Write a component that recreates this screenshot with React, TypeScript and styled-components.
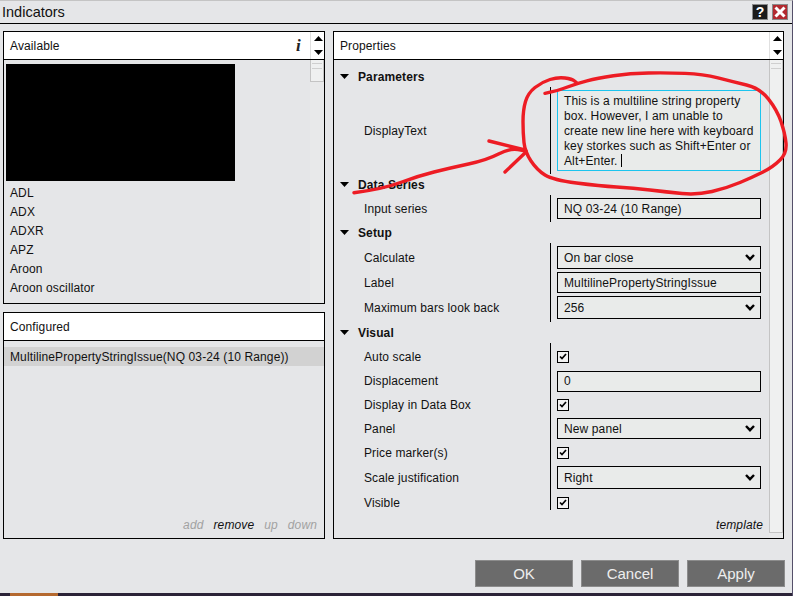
import React from "react";
import styled, { createGlobalStyle } from "styled-components";

const Global = createGlobalStyle`
  html, body { margin: 0; padding: 0; background: #e5e6e8; }
  * { box-sizing: border-box; }
`;

const Window = styled.div`
  position: relative;
  width: 793px;
  height: 596px;
  overflow: hidden;
  display: flex;
  flex-direction: column;
  background: #e5e6e8;
  color: #111;
  font: 12px/14px "Liberation Sans", Arial, sans-serif;
  letter-spacing: 0.12px;
  border-top: 1px solid #c4c4c4;
  border-right: 1px solid #55506a;
`;

const TitleBar = styled.header`
  height: 23px;
  flex: none;
  display: flex;
  align-items: center;
  gap: 4px;
  padding: 0 4px 0 2px;
  border-bottom: 1px solid #000;
`;

const Title = styled.h1`
  flex: 1;
  margin: 0;
  font-size: 14.5px;
  font-weight: 400;
  letter-spacing: 0;
`;

const WindowButton = styled.button<{ $close?: boolean }>`
  width: 16px;
  height: 16px;
  padding: 0;
  display: flex;
  align-items: center;
  justify-content: center;
  border: 1px solid #8a8a8a;
  background: ${(p) => (p.$close ? "#b22a30" : "#1b1b1b")};
  color: #fff;
  font: bold 14px/14px "Liberation Sans", Arial, sans-serif;
`;

const Main = styled.main`
  flex: 1;
  min-height: 0;
  display: grid;
  grid-template-columns: 322px 451px;
  column-gap: 8px;
  padding: 7px 0 0 3px;
  height: 515px;
`;

const LeftColumn = styled.div`
  display: flex;
  flex-direction: column;
  gap: 8px;
`;

const Panel = styled.section<{ $height: number }>`
  height: ${(p) => p.$height}px;
  display: flex;
  flex-direction: column;
  border: 1px solid #000;
`;

const PanelHeader = styled.div`
  height: 28px;
  flex: none;
  display: flex;
  align-items: center;
  padding-left: 6px;
  background: #fff;
  border-bottom: 1px solid #000;
  font-size: 12px;
`;

const PanelTitle = styled.span`
  flex: 1;
`;

const InfoGlyph = styled.span`
  width: 24px;
  padding-left: 10px;
  font: italic bold 17px/16px "Liberation Serif", serif;
  color: #222;
`;

const Stepper = styled.div`
  width: 14px;
  align-self: stretch;
  display: flex;
  flex-direction: column;
  align-items: center;
  justify-content: space-between;
  padding: 4px 0 4px 1px;
  border-left: 1px solid #e0e0e0;
`;

const PanelBody = styled.div`
  flex: 1;
  min-height: 0;
  display: flex;
`;

const ListColumn = styled.div`
  flex: 1;
  min-width: 0;
  display: flex;
  flex-direction: column;
`;

const Redacted = styled.div`
  width: 229px;
  height: 117px;
  flex: none;
  margin: 4px 0 2px 2px;
  background: #000;
`;

const ListItem = styled.div<{ $selected?: boolean }>`
  height: 19px;
  flex: none;
  display: flex;
  align-items: center;
  padding-left: 6px;
  background: ${(p) => (p.$selected ? "#d2d2d2" : "transparent")};
`;

const Track = styled.div`
  width: 14px;
  flex: none;
  background: #e8e9ea;
`;

const Thumb = styled.div<{ $height: number }>`
  height: ${(p) => p.$height}px;
  padding-top: 3px;
  background: #eff0f0;
  border: 1px solid #c4c4c4;
  border-top: 0;
  &::before {
    content: "";
    display: block;
    height: 4px;
    margin: 0 1px;
    border-top: 1px solid #cfcfcf;
    border-bottom: 1px solid #cfcfcf;
  }
`;

const ConfiguredList = styled(ListColumn)`
  padding-top: 6px;
`;

const ActionBar = styled.div`
  margin-top: auto;
  display: flex;
  justify-content: flex-end;
  gap: 10px;
  padding: 0 7px 6px 0;
`;

const ActionLink = styled.span<{ $enabled?: boolean }>`
  font-style: italic;
  color: ${(p) => (p.$enabled ? "#111" : "#a2a2a2")};
`;

const PropertyColumn = styled.div`
  flex: 1;
  min-width: 0;
  display: flex;
  flex-direction: column;
  padding-top: 6px;
`;

const SectionHeader = styled.div`
  height: 21px;
  flex: none;
  display: flex;
  align-items: center;
  gap: 9px;
  padding-left: 6px;
  font-weight: 700;
`;

const Row = styled.div<{ $height: number; $trim?: number }>`
  height: ${(p) => p.$height - (p.$trim ?? 0)}px;
  flex: none;
  display: grid;
  grid-template-columns: 216px 211px;
  padding-right: 8px;
`;

const RowLabel = styled.div<{ $trim?: number }>`
  display: flex;
  align-items: center;
  padding-left: 30px;
  height: calc(100% + ${(p) => p.$trim ?? 0}px);
`;

const RowValue = styled.div<{ $trim?: number }>`
  display: flex;
  align-items: center;
  padding-left: 6px;
  border-left: 1px solid #000;
  & > * {
    margin-bottom: ${(p) => -(p.$trim ?? 0)}px;
  }
`;

const Field = styled.div<{ $height: number; $focused?: boolean }>`
  width: 204px;
  height: ${(p) => p.$height}px;
  display: flex;
  align-items: center;
  justify-content: space-between;
  padding: 0 5px 0 6px;
  background: #e9ebea;
  border: 1px solid ${(p) => (p.$focused ? "#1cc4ee" : "#000")};
`;

const MultilineField = styled(Field)`
  align-items: flex-start;
  padding: 3px 6px;
  line-height: 15px;
`;

const Caret = styled.span`
  display: inline-block;
  width: 1px;
  height: 13px;
  margin-left: 3px;
  vertical-align: -2px;
  background: #000;
`;

const CheckBox = styled.div`
  width: 12px;
  height: 12px;
  display: flex;
  align-items: center;
  justify-content: center;
  background: #f2f2f2;
  border: 1px solid #000;
`;

const TemplateLink = styled.div`
  margin-top: auto;
  padding: 0 6px 6px 0;
  text-align: right;
  font-style: italic;
`;

const Footer = styled.footer`
  height: 54px;
  flex: none;
  display: flex;
  justify-content: flex-end;
  gap: 8px;
  padding: 21px 7px 0 0;
`;

const ActionButton = styled.button`
  width: 98px;
  height: 27px;
  padding: 0;
  background: #6b6b6b;
  border: 1px solid #8c8c8c;
  color: #eee;
  font: 15px/17px "Liberation Sans", Arial, sans-serif;
`;

const Taskbar = styled.div`
  height: 3px;
  flex: none;
  background: #2b2338;
  padding-left: 10px;
  &::before {
    content: "";
    display: block;
    width: 48px;
    height: 3px;
    background: #b5692f;
  }
`;

const Annotation = styled.svg`
  position: absolute;
  left: 0;
  top: -1px;
  width: 793px;
  height: 596px;
  pointer-events: none;
`;

const Up = () => (
  <svg width="9" height="5" viewBox="0 0 9 5"><path d="M4.500 0 9 5H0z" fill="#000" /></svg>
);
const Down = () => (
  <svg width="9" height="5" viewBox="0 0 9 5"><path d="M0 0h9L4.500 5z" fill="#000" /></svg>
);
const Chevron = () => (
  <svg width="10" height="7" viewBox="0 0 10 7">
    <path d="M1 1 5 5.200 9 1" fill="none" stroke="#000" strokeWidth="2.400" />
  </svg>
);
const Tick = () => (
  <svg width="8" height="7" viewBox="0 0 8 7">
    <path d="M1 3.500 3 5.500 7 1" fill="none" stroke="#000" strokeWidth="1.700" />
  </svg>
);

type Pt = [number, number];

const smooth = (pts: Pt[]) => {
  let d = `M${pts[0][0]} ${pts[0][1]}`;
  for (let i = 1; i < pts.length - 1; i++) {
    const [x, y] = pts[i];
    const [nx, ny] = pts[i + 1];
    d += `Q${x} ${y} ${(x + nx) / 2} ${(y + ny) / 2}`;
  }
  const last = pts[pts.length - 1];
  return `${d}L${last[0]} ${last[1]}`;
};

const ring: Pt[] = [
  [545, 93.3], [558, 90.7], [577, 83.3], [597, 78.3], [630, 73.3], [667, 72.7], [703, 74], [733, 81.7],
  [760, 88.3], [777, 110], [785, 133], [787, 153], [773, 167], [753, 177], [727, 188], [697, 195],
  [667, 192], [633, 188], [600, 186], [553, 180], [537, 170], [525, 152], [523, 133], [523, 110],
  [528, 93], [542, 82], [558, 77], [572, 79], [577, 83],
];
const shaft: Pt[] = [[354, 192.700], [383, 189], [418, 176], [450, 168], [487, 160], [510, 148], [526, 151]];
const barbs: Pt[][] = [
  [[489, 141], [525, 150]],
  [[505, 172], [526, 152]],
];

const Section = ({ title }: { title: string }) => (
  <SectionHeader>
    <Down />
    <span>{title}</span>
  </SectionHeader>
);

const PropRow = ({
  label, height, trim, children,
}: { label: string; height: number; trim?: number; children: React.ReactNode }) => (
  <Row $height={height} $trim={trim}>
    <RowLabel $trim={trim}>{label}</RowLabel>
    <RowValue $trim={trim}><div>{children}</div></RowValue>
  </Row>
);

const Select = ({ value, height }: { value: string; height: number }) => (
  <Field $height={height}>
    <span>{value}</span>
    <Chevron />
  </Field>
);

const Check = () => (
  <CheckBox><Tick /></CheckBox>
);

const indicators = ["ADL", "ADX", "ADXR", "APZ", "Aroon", "Aroon oscillator"];

export default function App() {
  return (
    <Window>
      <Global />
      <TitleBar>
        <Title>Indicators</Title>
        <WindowButton aria-label="Help">?</WindowButton>
        <WindowButton $close aria-label="Close">
          <svg width="12" height="12" viewBox="0 0 12 12">
            <path d="M1.500 1.500 10.500 10.500M10.500 1.500 1.500 10.500" stroke="#fff" strokeWidth="3" />
          </svg>
        </WindowButton>
      </TitleBar>
      <Main>
        <LeftColumn>
          <Panel $height={273}>
            <PanelHeader>
              <PanelTitle>Available</PanelTitle>
              <InfoGlyph>i</InfoGlyph>
              <Stepper><Up /><Down /></Stepper>
            </PanelHeader>
            <PanelBody>
              <ListColumn>
                <Redacted />
                {indicators.map((name) => (
                  <ListItem key={name}>{name}</ListItem>
                ))}
              </ListColumn>
              <Track><Thumb $height={22} /></Track>
            </PanelBody>
          </Panel>
          <Panel $height={227}>
            <PanelHeader>
              <PanelTitle>Configured</PanelTitle>
            </PanelHeader>
            <ConfiguredList>
              <ListItem $selected>MultilinePropertyStringIssue(NQ 03-24 (10 Range))</ListItem>
              <ActionBar>
                <ActionLink>add</ActionLink>
                <ActionLink $enabled>remove</ActionLink>
                <ActionLink>up</ActionLink>
                <ActionLink>down</ActionLink>
              </ActionBar>
            </ConfiguredList>
          </Panel>
        </LeftColumn>
        <Panel $height={508}>
          <PanelHeader>
            <PanelTitle>Properties</PanelTitle>
            <Stepper><Up /><Down /></Stepper>
          </PanelHeader>
          <PanelBody>
            <PropertyColumn>
              <Section title="Parameters" />
              <PropRow label="DisplayText" height={87}>
                <MultilineField $height={81} $focused>
                  <span>
                    This is a multiline string property box. However, I am unable to create new line here with keyboard key storkes such as Shift+Enter or Alt+Enter.
                    <Caret />
                  </span>
                </MultilineField>
              </PropRow>
              <Section title="Data Series" />
              <PropRow label="Input series" height={27}>
                <Field $height={21}>NQ 03-24 (10 Range)</Field>
              </PropRow>
              <Section title="Setup" />
              <PropRow label="Calculate" height={29}><Select value="On bar close" height={23} /></PropRow>
              <PropRow label="Label" height={21}>
                <Field $height={21}>MultilinePropertyStringIssue</Field>
              </PropRow>
              <PropRow label="Maximum bars look back" height={29}><Select value="256" height={23} /></PropRow>
              <Section title="Visual" />
              <PropRow label="Auto scale" height={27}><Check /></PropRow>
              <PropRow label="Displacement" height={22}>
                <Field $height={21}>0</Field>
              </PropRow>
              <PropRow label="Display in Data Box" height={25}><Check /></PropRow>
              <PropRow label="Panel" height={23}><Select value="New panel" height={21} /></PropRow>
              <PropRow label="Price marker(s)" height={25}><Check /></PropRow>
              <PropRow label="Scale justification" height={25}><Select value="Right" height={23} /></PropRow>
              <PropRow label="Visible" height={25} trim={5}><Check /></PropRow>
              <TemplateLink>template</TemplateLink>
            </PropertyColumn>
            <Track><Thumb $height={473} /></Track>
          </PanelBody>
        </Panel>
      </Main>
      <Footer>
        <ActionButton>OK</ActionButton>
        <ActionButton>Cancel</ActionButton>
        <ActionButton>Apply</ActionButton>
      </Footer>
      <Taskbar />
      <Annotation viewBox="0 0 793 596" fill="none" stroke="#ed1c24" strokeWidth="3.400" strokeLinecap="round" strokeLinejoin="round">
        <path d={smooth(ring)} />
        <path d={smooth(shaft)} />
        {barbs.map((b) => (
          <path key={b[0][0]} d={smooth(b)} />
        ))}
      </Annotation>
    </Window>
  );
}
